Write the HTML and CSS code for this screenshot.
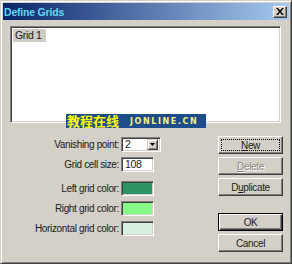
FILE: index.html
```html
<!DOCTYPE html>
<html>
<head>
<meta charset="utf-8">
<link rel="stylesheet" href="styles.css">
</head>
<body>
<div class="window">
  <div class="titlebar">
    <span class="title">Define Grids</span>
    <span class="close"><svg width="8" height="7" viewBox="0 0 8 7"><path d="M0 0h2l2 2.5L6 0h2L5 3.5 8 7H6L4 4.5 2 7H0l3-3.5z" fill="#000"/></svg></span>
  </div>
  <div class="content">
    <div class="listbox">
      <div class="item sel">Grid 1</div>
    </div>
    <div class="lower">
      <div class="form">
        <div class="row"><span class="lbl">Vanishing point:</span><span class="combo"><span class="ctext">2</span><span class="cbtn"><svg width="5" height="3" viewBox="0 0 5 3"><path d="M0 0h5L2.5 3z" fill="#000"/></svg></span></span></div>
        <div class="row"><span class="lbl">Grid cell size:</span><span class="edit">108</span></div>
        <div class="row gapped"><span class="lbl">Left grid color:</span><span class="swatch c1"></span></div>
        <div class="row"><span class="lbl">Right grid color:</span><span class="swatch c2"></span></div>
        <div class="row"><span class="lbl">Horizontal grid color:</span><span class="swatch c3"></span></div>
      </div>
      <div class="buttons">
        <div class="btn focus"><span class="in"><u>N</u>ew</span></div>
        <div class="btn disabled"><span class="in"><u>D</u>elete</span></div>
        <div class="btn"><span class="in">D<u>u</u>plicate</span></div>
        <div class="btn default spaced"><span class="in">OK</span></div>
        <div class="btn"><span class="in">Cancel</span></div>
      </div>
    </div>
  </div>
  <div class="watermark"><span class="cn">教程在线</span><span class="en">JONLINE.CN</span></div>
</div>
</body>
</html>
```
FILE: styles.css
```css
* { box-sizing: border-box; }
html, body { margin: 0; padding: 0; }
body {
  width: 292px; height: 264px; overflow: hidden;
  font-family: "Liberation Sans", Arial, sans-serif;
  font-size: 10px; letter-spacing: -0.35px; color: #1a1a1a;
}
.window {
  position: relative;
  width: 292px; height: 264px;
  background: #d4d0c8;
  border: 1px solid; border-color: #d4d0c8 #404040 #404040 #d4d0c8;
  box-shadow: inset 1px 1px 0 #fff, inset -1px -1px 0 #808080;
  padding: 2px;
}
.titlebar {
  height: 17px;
  background: linear-gradient(to right, #0a246a, #a6caf0);
  display: flex; align-items: center; justify-content: space-between;
  padding: 0 2px 0 1px;
}
.title { color: #5fd8f4; font-weight: bold; font-size: 10.5px; letter-spacing: -0.2px; }
.close {
  width: 14px; height: 12px;
  background: #d4d0c8;
  border: 1px solid; border-color: #fff #404040 #404040 #fff;
  box-shadow: inset -1px -1px 0 #808080;
  display: flex; align-items: center; justify-content: center;
}
.content { padding: 6px 6px 0 7px; }
.listbox {
  height: 97px; margin-right: 2px;
  background: #fff;
  border: 1px solid; border-color: #808080 #fff #fff #808080;
  box-shadow: inset 1px 1px 0 #404040, inset -1px -1px 0 #d4d0c8;
  padding: 2px;
}
.item { display: inline-block; padding: 0 4px 0 2px; height: 13px; line-height: 13px; font-size: 10.5px; }
.item.sel { background: #cfccc6; }
.lower { display: flex; justify-content: space-between; margin-top: 13px; }
.form { display: flex; flex-direction: column; gap: 5px; margin-top: 1px; }
.row { display: flex; align-items: center; height: 15px; }
.row.gapped { margin-top: 4px; }
.lbl { width: 111px; text-align: right; padding-right: 2px; }
.combo, .edit, .swatch {
  height: 15px;
  border: 1px solid; border-color: #808080 #fff #fff #808080;
  box-shadow: inset 1px 1px 0 #404040, inset -1px -1px 0 #d4d0c8;
}
.combo { width: 40px; background: #fff; display: flex; align-items: center; justify-content: space-between; padding: 2px 2px 2px 3px; font-size: 10.5px; }
.ctext { line-height: 11px; }
.cbtn {
  width: 11px; height: 11px; background: #d4d0c8;
  border: 1px solid; border-color: #d4d0c8 #404040 #404040 #d4d0c8;
  box-shadow: inset 1px 1px 0 #fff, inset -1px -1px 0 #808080;
  display: flex; align-items: center; justify-content: center;
}
.edit { width: 33px; background: #fff; padding: 0 3px; line-height: 13px; font-size: 10.5px; }
.swatch { width: 33px; }
.c1 { background: #2f9463; }
.c2 { background: #86f986; }
.c3 { background: #d6efdf; }
.buttons { display: flex; flex-direction: column; gap: 3px; }
.btn {
  width: 65px; height: 18px;
  border: 1px solid; border-color: #fff #404040 #404040 #fff;
  box-shadow: inset -1px -1px 0 #808080;
  display: flex; align-items: center; justify-content: center;
  padding: 2px;
}
.btn .in { flex: 1; align-self: stretch; display: flex; align-items: center; justify-content: center; border: 1px solid transparent; }
.btn.focus .in { border: 1px dotted #000; }
.btn.disabled { color: #8a8780; text-shadow: 1px 1px 0 #fff; }
.btn.default {
  border: 1px solid #000;
  box-shadow: inset 1px 1px 0 #fff, inset -1px -1px 0 #404040, inset -2px -2px 0 #808080;
}
.btn.spaced { margin-top: 14px; }
.watermark {
  position: absolute; left: 65px; top: 113px;
  width: 140px; height: 14px;
  background: #1e4d8c;
  display: flex; align-items: center; gap: 11px; padding-left: 1px;
  letter-spacing: 0;
}
.cn { color: #ffff00; font-family: "Noto Sans CJK SC", sans-serif; font-weight: bold; font-size: 13px; line-height: 14px; }
.en { color: #f4f27a; font-family: "DejaVu Sans", sans-serif; font-weight: bold; font-size: 8px; letter-spacing: 1.6px; }
```
